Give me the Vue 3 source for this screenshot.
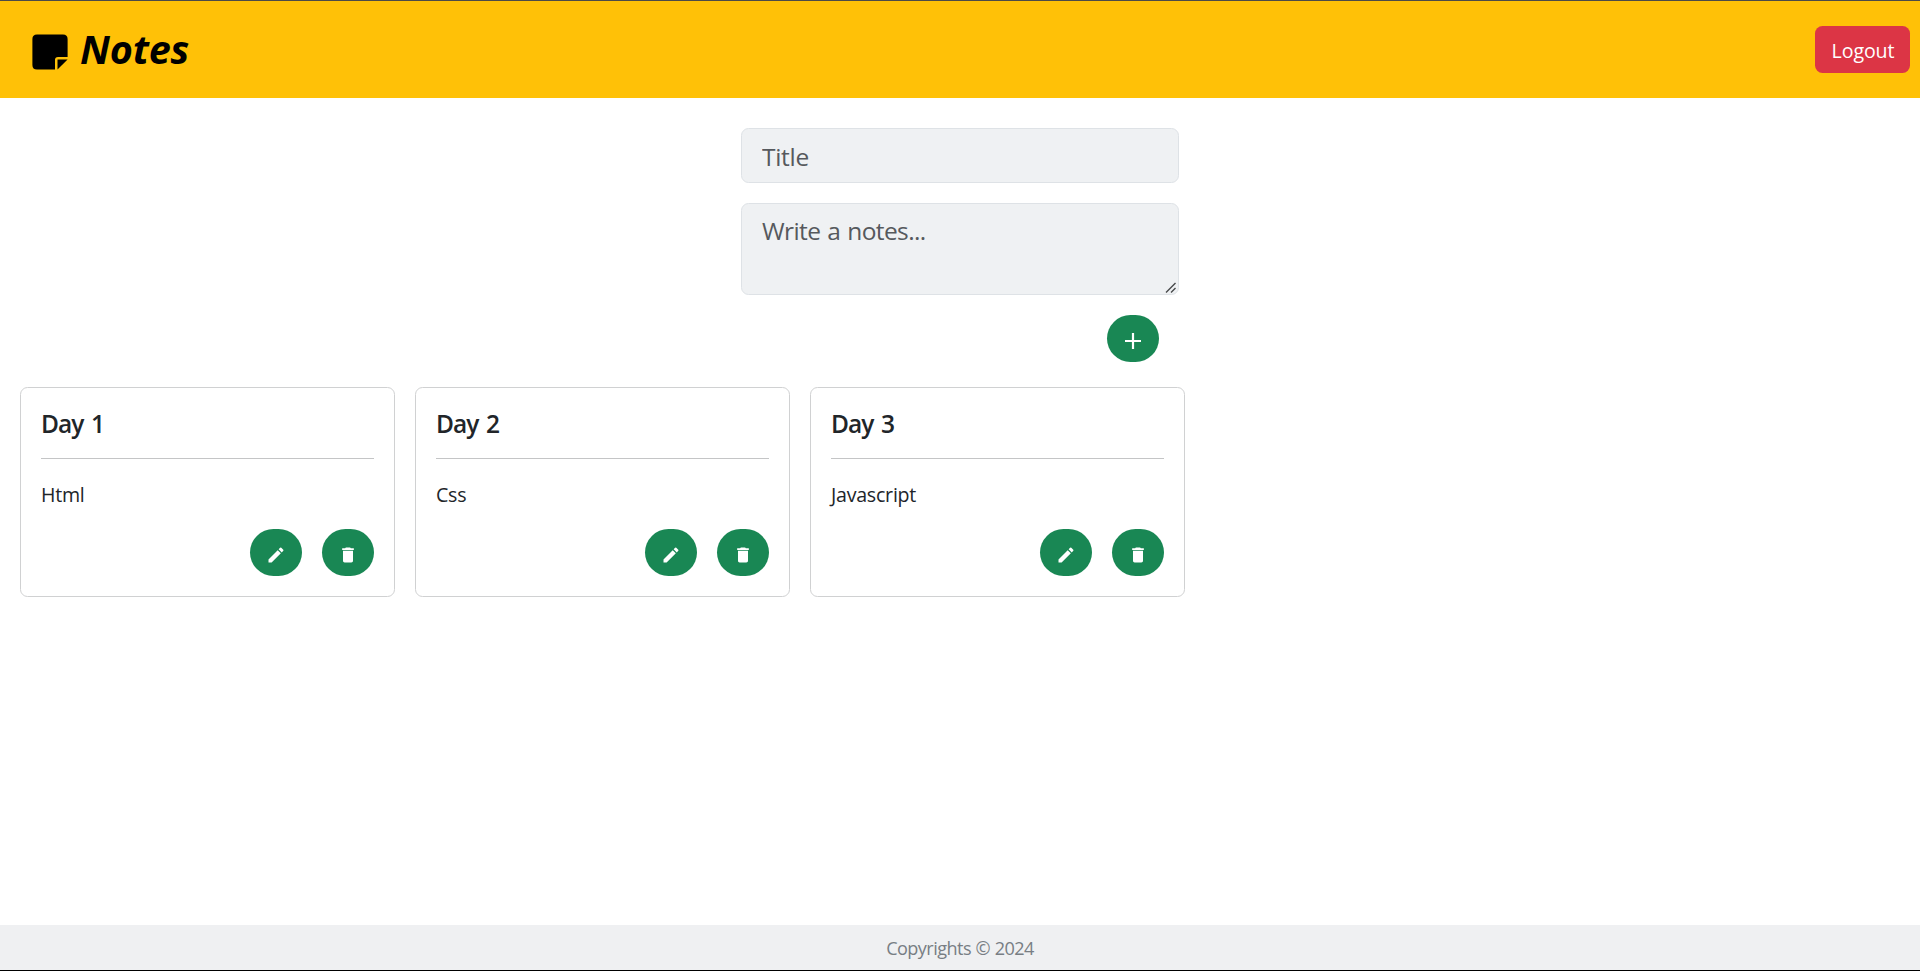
<script setup>
import { ref } from 'vue'

const title = ref('')
const body = ref('')
const notes = ref([
  { title: 'Day 1', text: 'Html' },
  { title: 'Day 2', text: 'Css' },
  { title: 'Day 3', text: 'Javascript' },
])
</script>

<template>
  <div class="page">
    <header class="navbar">
      <div class="brand">
        <svg class="logo" viewBox="0 0 36 36" aria-hidden="true">
          <path d="M5 .4H31Q35.600 .4 35.600 5V23H26Q23 23 23 26V35.600H5Q.4 35.600 .4 31V5Q.4 .4 5 .4Z" />
          <path d="M25.500 25.500H35.600L25.500 35.600Z" />
        </svg>
        <h1>Notes</h1>
      </div>
      <button class="logout">Logout</button>
    </header>

    <main>
      <form class="composer" @submit.prevent>
        <input v-model="title" class="field title" placeholder="Title" />
        <div class="body-wrap">
          <textarea v-model="body" class="field body" placeholder="Write a notes..."></textarea>
          <svg class="grip" viewBox="0 0 12 12" aria-hidden="true">
            <path d="M1 10.500 10.500 1M6 10.500 10.500 6" />
          </svg>
        </div>
        <button class="round add" aria-label="Add">
          <svg viewBox="0 0 20 20"><path d="M8.900 2h2.200v6.900H18v2.200h-6.900V18H8.900v-6.900H2V8.900h6.900z" /></svg>
        </button>
      </form>

      <section class="notes">
        <article v-for="note in notes" :key="note.title" class="card">
          <h2>{{ note.title }}</h2>
          <hr />
          <p>{{ note.text }}</p>
          <div class="actions">
            <button class="round" aria-label="Edit">
              <svg viewBox="0 0 24 24"><path d="M3 17.25V21h3.75L17.81 9.94l-3.75-3.75L3 17.25zM20.71 7.04a1 1 0 0 0 0-1.41l-2.34-2.34a1 1 0 0 0-1.41 0l-1.83 1.83 3.75 3.75 1.83-1.83z" /></svg>
            </button>
            <button class="round" aria-label="Delete">
              <svg viewBox="0 0 24 24"><path d="M6 19c0 1.100.9 2 2 2h8c1.100 0 2-.9 2-2V7H6v12zM19 4h-3.500l-1-1h-5l-1 1H5v2h14V4z" /></svg>
            </button>
          </div>
        </article>
      </section>
    </main>

    <footer><span>Copyrights © 2024</span></footer>
  </div>
</template>

<style>
body { margin: 0; background: #fff; }
</style>

<style scoped>
* { box-sizing: border-box; }
.page {
  height: 971px;
  display: flex;
  flex-direction: column;
  overflow: hidden;
  border-top: 1px solid #4c4a48;
  border-bottom: 1px solid #000;
  color: #212529;
  font-family: "Segoe UI", "Open Sans", "Noto Sans", sans-serif;
  font-size: 19.6px;
}
button { font-family: inherit; border: 0; padding: 0; }
.navbar {
  height: 97px;
  flex: none;
  display: flex;
  align-items: center;
  justify-content: space-between;
  padding: 0 10px 0 32px;
  background: #ffc107;
}
.brand { display: flex; align-items: center; gap: 12px; color: #000; }
.logo { width: 36px; height: 36px; position: relative; top: 2.5px; }
h1 { margin: 0; padding-bottom: 2px; font-size: 39.6px; line-height: 48px; font-weight: 700; font-style: italic; letter-spacing: -0.2px; }
.logout {
  width: 95px;
  height: 47px;
  padding: 2px 0 0 1px;
  border-radius: 7.5px;
  background: #dc3545;
  color: #fff;
  font-size: 19.6px;
  letter-spacing: -0.1px;
}
main { flex: 1; }
.composer {
  width: 438px;
  margin: 30px auto 0;
  display: flex;
  flex-direction: column;
}
.field {
  width: 438px;
  border: 1px solid #dee2e6;
  border-radius: 7.5px;
  background: #eff1f3;
  color: #212529;
  font-family: inherit;
  font-size: 24.5px;
  letter-spacing: -0.6px;
  word-spacing: 1.2px;
  outline: 0;
}
.field::placeholder { color: #56595d; opacity: 1; }
.title { height: 55px; padding: 2px 20px 0; letter-spacing: -0.3px; }
.body-wrap { position: relative; margin-top: 20px; }
.body { height: 92px; padding: 8px 20px; line-height: 37px; display: block; resize: none; }
.grip { position: absolute; right: 2px; bottom: 1px; width: 12px; height: 12px; fill: none; stroke: #48494a; stroke-width: 1.4; }
.round {
  width: 52px;
  height: 47px;
  border-radius: 25px;
  background: #198754;
  display: flex;
  align-items: center;
  justify-content: center;
}
.round svg { width: 20px; height: 20px; fill: #fff; position: relative; top: 2.5px; }
.add { align-self: flex-end; margin: 20px 20px 0 0; }
.notes { display: flex; gap: 20px; padding: 25px 20px 0; }
.card {
  width: 375px;
  height: 210px;
  padding: 20px;
  border: 1px solid #d0d1d2;
  border-radius: 7.5px;
}
h2 { margin: 0; padding-top: 1px; font-size: 24.5px; line-height: 30px; height: 30px; font-weight: 600; letter-spacing: -0.9px; word-spacing: 2px; }
hr { margin: 20px 0; border: 0; border-top: 1px solid #c4c5c6; }
p { margin: 0; padding-top: 1px; height: 30px; line-height: 30px; letter-spacing: -0.24px; }
.actions { display: flex; justify-content: flex-end; gap: 20px; margin-top: 20px; }
footer {
  height: 45px;
  flex: none;
  display: flex;
  align-items: center;
  justify-content: center;
  background: #eff0f2;
  color: #787e84;
  font-size: 18.1px;
  letter-spacing: -0.55px;
  word-spacing: 0.4px;
}
</style>
